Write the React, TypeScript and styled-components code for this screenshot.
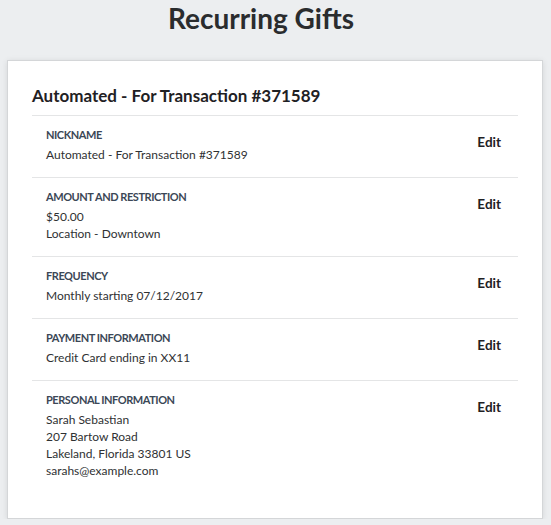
import React from "react";
import styled, { createGlobalStyle } from "styled-components";

const GlobalStyle = createGlobalStyle`
  html, body {
    margin: 0;
    padding: 0;
    background: #eceef0;
    font-family: Lato, "Open Sans", Arial, sans-serif;
  }
`;

const Page = styled.div`
  padding: 0 8px 0 7px;
  display: flex;
  flex-direction: column;
`;

const Title = styled.h1`
  margin: 0 28px 24px 0;
  font-size: 28px;
  line-height: 36px;
  font-weight: 700;
  color: #2a2c2e;
  text-align: center;
`;

const Card = styled.section`
  background: #fff;
  border: 1px solid #d4d6d8;
  box-shadow: 0 1px 6px rgba(0, 0, 0, 0.1);
  padding: 24px 24px 25px;
`;

const CardHeading = styled.h2`
  margin: 0 0 8px;
  font-size: 17px;
  line-height: 22px;
  font-weight: 700;
  color: #1f2124;
`;

const Row = styled.div`
  display: flex;
  justify-content: space-between;
  align-items: flex-start;
  border-top: 1px solid #e4e5e6;
  padding: 10px 17px 14px 14px;
`;

const Info = styled.div`
  display: flex;
  flex-direction: column;
`;

const Label = styled.div`
  font-size: 11px;
  line-height: 18px;
  font-weight: 700;
  color: #3b4756;
  text-transform: uppercase;
  letter-spacing: -0.45px;
  margin-bottom: 2px;
`;

const Value = styled.div`
  font-size: 12px;
  line-height: 17px;
  color: #2f3133;
`;

const EditButton = styled.button`
  margin-top: 7px;
  padding: 0;
  border: none;
  background: none;
  font-family: inherit;
  font-size: 13.5px;
  line-height: 18px;
  font-weight: 700;
  color: #1f2124;
  cursor: pointer;
`;

const sections = [
  { label: "Nickname", values: ["Automated - For Transaction #371589"] },
  { label: "Amount and Restriction", values: ["$50.00", "Location - Downtown"] },
  { label: "Frequency", values: ["Monthly starting 07/12/2017"] },
  { label: "Payment Information", values: ["Credit Card ending in XX11"] },
  {
    label: "Personal Information",
    values: [
      "Sarah Sebastian",
      "207 Bartow Road",
      "Lakeland, Florida 33801 US",
      "sarahs@example.com",
    ],
  },
];

export default function App() {
  return (
    <>
      <GlobalStyle />
      <Page>
        <Title>Recurring Gifts</Title>
        <Card>
          <CardHeading>Automated - For Transaction #371589</CardHeading>
          {sections.map((s) => (
            <Row key={s.label}>
              <Info>
                <Label>{s.label}</Label>
                {s.values.map((v) => (
                  <Value key={v}>{v}</Value>
                ))}
              </Info>
              <EditButton>Edit</EditButton>
            </Row>
          ))}
        </Card>
      </Page>
    </>
  );
}
